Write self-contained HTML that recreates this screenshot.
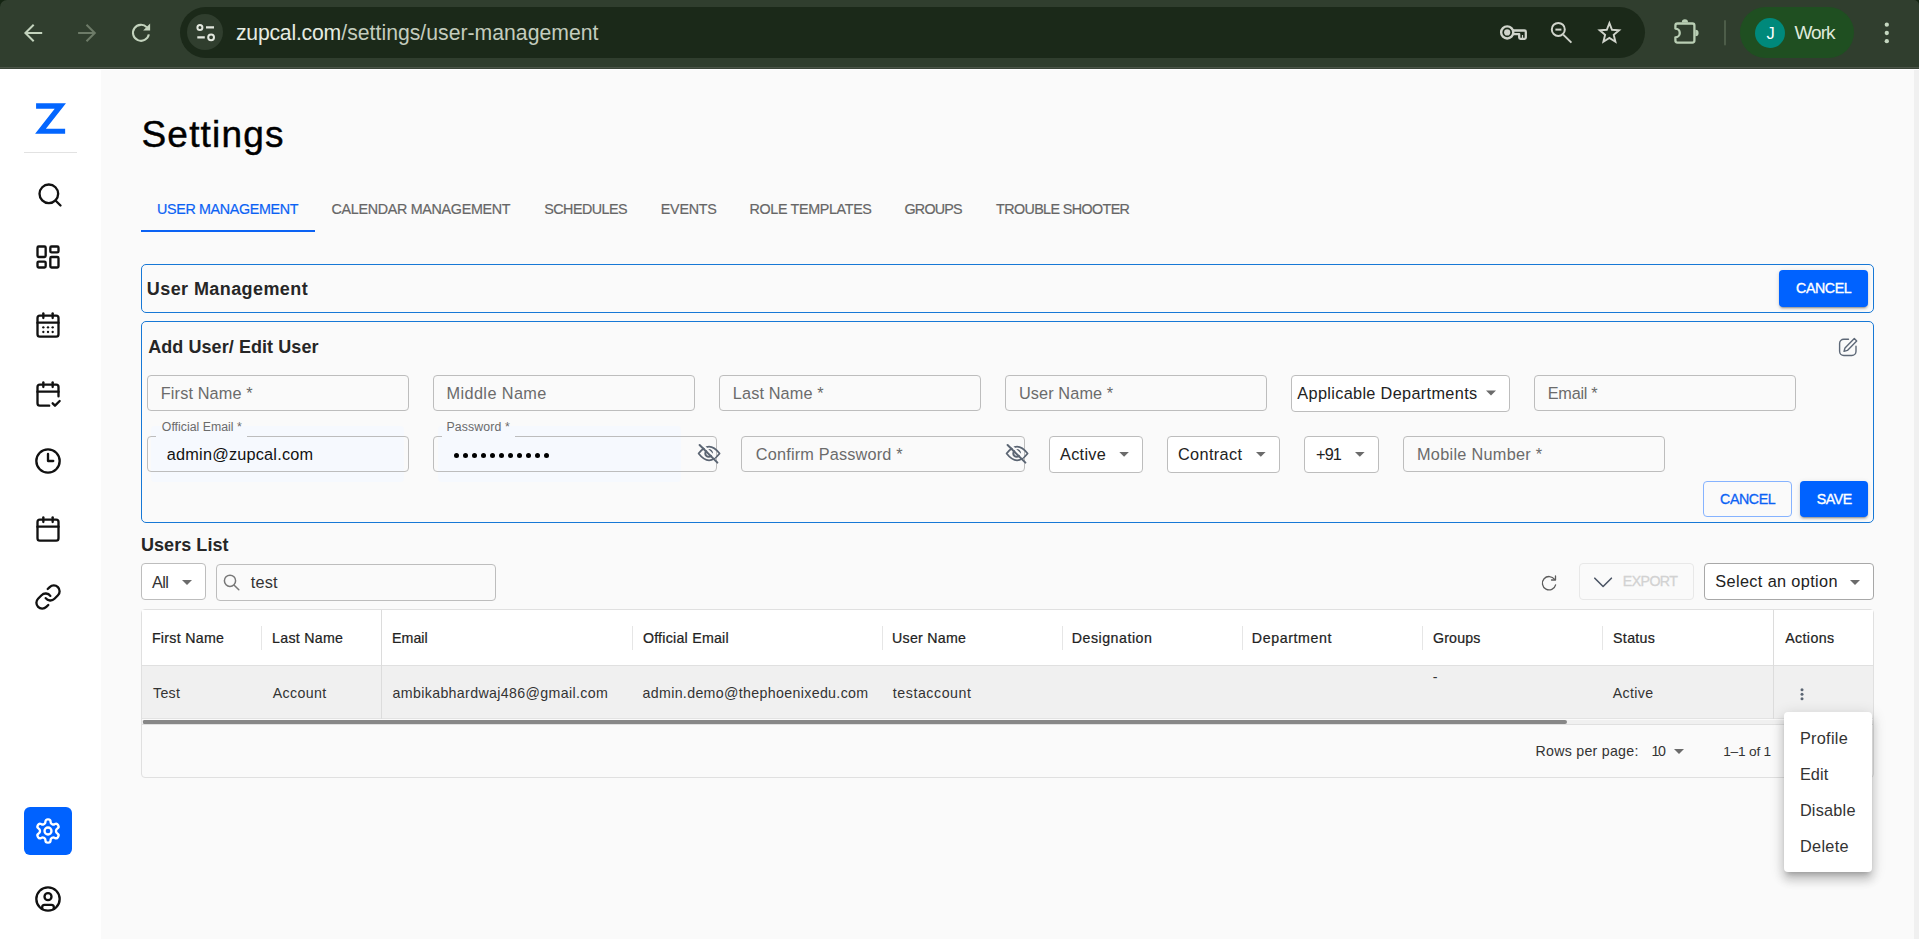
<!DOCTYPE html>
<html lang="en"><head><meta charset="utf-8"><title>Zupcal - Settings</title>
<style>
*{box-sizing:border-box;margin:0;padding:0}
html,body{width:1919px;height:939px;overflow:hidden;background:#fafafa;font-family:"Liberation Sans",sans-serif;}
.a{position:absolute}
.t{position:absolute;white-space:nowrap;line-height:1;font-family:"Liberation Sans",sans-serif;}
#chromebg{left:0;top:0;width:1919px;height:20px;background:#142412}
#chrome{left:0;top:0;width:1919px;height:69px;background:#303e2e;border-radius:7px 5px 0 0}
#chromeline{left:0;top:67px;width:1919px;height:1px;background:#4b5548}
#chromeline2{left:0;top:68px;width:1919px;height:1px;background:#3a4538}
#whiteline{left:0;top:69px;width:1919px;height:1px;background:#fff}
#omni{left:180px;top:7px;width:1465px;height:51px;border-radius:26px;background:#1b2919}
#site{left:187px;top:14px;width:36px;height:36px;border-radius:18px;background:#303e2e}
#prof{left:1740px;top:7px;width:114px;height:51px;border-radius:26px;background:#1f4f21}
#avatar{left:1755px;top:18px;width:30px;height:30px;border-radius:15px;background:#00897b}
#sidebar{left:0;top:70px;width:101px;height:869px;background:#fff}
#sdiv{left:24px;top:152px;width:53px;height:1px;background:#e2e2e2}
#setbtn{left:24px;top:807px;width:48px;height:48px;border-radius:6px;background:#0062ff}
#scrollstrip{left:1914px;top:70px;width:5px;height:869px;background:#f0f0f0}
#tabline{left:141px;top:230px;width:174px;height:2px;background:#0b62f4}
.card{border:1px solid #1778d6;border-radius:5px;background:#fafafa}
.inp{border:1px solid #bdbdbd;border-radius:4px;background:transparent}
.sel{border:1px solid #bdbdbd;border-radius:4px;background:#fff}
.btnp{background:#0062ff;border-radius:4px;box-shadow:0 3px 1px -2px rgba(0,0,0,.2),0 2px 2px 0 rgba(0,0,0,.14),0 1px 5px 0 rgba(0,0,0,.12)}
.btno{border:1px solid #86b3ff;border-radius:4px;background:transparent}
.notch{background:#f6f9fe;height:3px}
.af{background:#f6f9fe;border-radius:4px}
#table{left:141px;top:609px;width:1733px;height:169px;border:1px solid #e0e0e0;border-radius:4px;background:#fafafa;overflow:hidden}
#thead{left:142px;top:610px;width:1731px;height:55px;background:#fff}
#trow{left:142px;top:666px;width:1731px;height:52px;background:#f0f0f0}
.hl{height:1px;background:#e0e0e0}
.vl{width:1px;background:#e0e0e0}
.sep{width:1px;height:24px;top:626px;background:#e6e6e6}
#htrack{left:142px;top:720px;width:1731px;height:4px;background:#f0f0f0}
#hscroll{left:143px;top:720px;width:1424px;height:4px;border-radius:2px 3px 3px 2px;background:#878787}
#menu{left:1784px;top:712px;width:88px;height:160px;border-radius:4px;background:#fff;box-shadow:0 5px 5px -3px rgba(0,0,0,.2),0 8px 10px 1px rgba(0,0,0,.14),0 3px 14px 2px rgba(0,0,0,.12)}
svg{position:absolute;left:0;top:0;overflow:visible}
.dot{width:5px;height:5px;border-radius:50%;background:#000;top:452.5px}

</style></head>
<body>
<!-- ===== browser chrome ===== -->
<div class="a" id="chromebg"></div>
<div class="a" id="chrome"></div>
<div class="a" id="chromeline"></div>
<div class="a" id="chromeline2"></div>
<div class="a" id="whiteline"></div>
<div class="a" id="omni"></div>
<div class="a" id="site"></div>
<div class="a" id="prof"></div>
<div class="a" id="avatar"></div>
<svg width="1919" height="70" viewBox="0 0 1919 70" fill="none" stroke-linecap="round" stroke-linejoin="round">
  <!-- back -->
  <path d="M42.2 33H25.6M33.7 24.7l-8.3 8.3 8.3 8.3" stroke="#c3d3bd" stroke-width="2" stroke-linecap="butt" stroke-linejoin="miter"/>
  <!-- forward -->
  <path d="M78.1 33h16.4M86.5 24.7l8.3 8.3-8.3 8.3" stroke="#6d7b68" stroke-width="2" stroke-linecap="butt" stroke-linejoin="miter"/>
  <!-- reload -->
  <path d="M146.9 27.4A8 8 0 1 0 148.85 34.4" stroke="#c3d3bd" stroke-width="2.1" stroke-linecap="butt"/>
  <path d="M150.1 23.4v7h-7z" fill="#c3d3bd"/>
  <!-- site info (tune) -->
  <circle cx="199.9" cy="27.4" r="2.5" stroke="#e3e8df" stroke-width="2"/>
  <path d="M206 27.4h8M197.3 37.4h7.5" stroke="#e3e8df" stroke-width="2.1" stroke-linecap="butt"/>
  <circle cx="211.1" cy="37.3" r="2.9" stroke="#e3e8df" stroke-width="2"/>
  <!-- key -->
  <circle cx="1507.2" cy="32.4" r="6.05" stroke="#d0d4cb" stroke-width="2.4"/>
  <circle cx="1507.2" cy="32.4" r="3.1" fill="#d0d4cb"/>
  <path d="M1512.9 30.5H1524.5q1.3 0 1.3 1.3V37.6q0 1.3-1.3 1.3H1520.5q-1.3 0-1.3-1.3V34.2H1513.2" stroke="#d0d4cb" stroke-width="2.3" stroke-linecap="butt" stroke-linejoin="round"/>
  <path d="M1522.5 35V38" stroke="#d0d4cb" stroke-width="1.2" stroke-linecap="butt"/>
  <!-- zoom out -->
  <circle cx="1558.3" cy="29.4" r="6.5" stroke="#d0d4cb" stroke-width="2"/>
  <path d="M1555.4 29.6h6" stroke="#d0d4cb" stroke-width="2" stroke-linecap="butt"/>
  <path d="M1563.2 34.6l8.2 8" stroke="#d0d4cb" stroke-width="2" stroke-linecap="butt"/>
  <!-- star -->
  <path d="M1609.4 23.2 L1612.0 29.8 L1619.1 30.2 L1613.7 34.8 L1615.4 41.7 L1609.4 37.9 L1603.4 41.7 L1605.1 34.8 L1599.7 30.2 L1606.8 29.8Z" stroke="#d0d4cb" stroke-width="1.9" stroke-linejoin="miter"/>
  <!-- puzzle -->
  <path d="M1675.4 28.6V25.5a2 2 0 0 1 2-2H1692.4a2 2 0 0 1 2 2V40.6a2 2 0 0 1-2 2H1677.4a2 2 0 0 1-2-2V37.3a4.3 4.3 0 0 0 0-8.7z" stroke="#b9ceb4" stroke-width="2.3" stroke-linejoin="round"/>
  <path d="M1681.8 22.6a3.1 3.3 0 0 1 6.2 0z" fill="#b9ceb4"/>
  <path d="M1695.4 29.8a3.2 3.2 0 0 1 0 6.4z" fill="#b9ceb4"/>
  <!-- divider -->
  <path d="M1725 21v23.5" stroke="#4d5d49" stroke-width="2" stroke-linecap="round"/>
  <!-- menu dots -->
  <circle cx="1886.8" cy="24.7" r="2.15" fill="#c5d7c0"/><circle cx="1886.8" cy="33" r="2.15" fill="#c5d7c0"/><circle cx="1886.8" cy="41.2" r="2.15" fill="#c5d7c0"/>
</svg>

<!-- ===== app ===== -->
<div class="a" id="sidebar"></div>
<div class="a" id="scrollstrip"></div>
<div class="a" id="sdiv"></div>
<div class="a" id="setbtn"></div>
<svg width="101" height="939" viewBox="0 0 101 939" fill="none">
  <path d="M36.08 103.25H65.97L45.88 128.73H65.14V133.82H35.1L54.7 108.84H36.08Z" fill="#0366ff"/>
</svg>
<!-- sidebar icons (28px, lucide-like) -->
<svg class="ic" style="left:35.9px;top:180.9px" width="28" height="28" viewBox="0 0 24 24" fill="none" stroke="#111" stroke-width="2" stroke-linecap="round" stroke-linejoin="round"><circle cx="11" cy="11" r="8"/><path d="m21 21-4.3-4.3"/></svg>
<svg class="ic" style="left:34.4px;top:242.7px" width="28" height="28" viewBox="0 0 24 24" fill="none" stroke="#111" stroke-width="2" stroke-linecap="round" stroke-linejoin="round"><rect width="7" height="9" x="3" y="3" rx="1"/><rect width="7" height="5" x="14" y="3" rx="1"/><rect width="7" height="9" x="14" y="12" rx="1"/><rect width="7" height="5" x="3" y="16" rx="1"/></svg>
<svg class="ic" style="left:34.3px;top:310.9px" width="28" height="28" viewBox="0 0 24 24" fill="none" stroke="#111" stroke-width="2" stroke-linecap="round" stroke-linejoin="round"><path d="M8 2v4"/><path d="M16 2v4"/><rect width="18" height="18" x="3" y="4" rx="2"/><path d="M3 10h18"/><path d="M8 14h.01"/><path d="M12 14h.01"/><path d="M16 14h.01"/><path d="M8 18h.01"/><path d="M12 18h.01"/><path d="M16 18h.01"/></svg>
<svg class="ic" style="left:34.3px;top:379.8px" width="28" height="28" viewBox="0 0 24 24" fill="none" stroke="#111" stroke-width="2" stroke-linecap="round" stroke-linejoin="round"><path d="M8 2v4"/><path d="M16 2v4"/><path d="M21 14V6a2 2 0 0 0-2-2H5a2 2 0 0 0-2 2v14a2 2 0 0 0 2 2h8"/><path d="M3 10h18"/><path d="m16 20 2 2 4-4"/></svg>
<svg class="ic" style="left:34.2px;top:447.4px" width="28" height="28" viewBox="0 0 24 24" fill="none" stroke="#111" stroke-width="2" stroke-linecap="round" stroke-linejoin="round"><circle cx="12" cy="12" r="10"/><polyline points="12 6 12 12 16.5 12"/></svg>
<svg class="ic" style="left:34.3px;top:515px" width="28" height="28" viewBox="0 0 24 24" fill="none" stroke="#111" stroke-width="2" stroke-linecap="round" stroke-linejoin="round"><path d="M8 2v4"/><path d="M16 2v4"/><rect width="18" height="18" x="3" y="4" rx="2"/><path d="M3 10h18"/></svg>
<svg class="ic" style="left:34.3px;top:582.7px" width="28" height="28" viewBox="0 0 24 24" fill="none" stroke="#111" stroke-width="2" stroke-linecap="round" stroke-linejoin="round"><path d="M10 13a5 5 0 0 0 7.54.54l3-3a5 5 0 0 0-7.07-7.07l-1.72 1.71"/><path d="M14 11a5 5 0 0 0-7.54-.54l-3 3a5 5 0 0 0 7.07 7.07l1.71-1.71"/></svg>
<svg class="ic" style="left:34px;top:817.1px" width="28" height="28" viewBox="0 0 24 24" fill="none" stroke="#fff" stroke-width="2" stroke-linecap="round" stroke-linejoin="round"><path d="M12.22 2h-.44a2 2 0 0 0-2 2v.18a2 2 0 0 1-1 1.73l-.43.25a2 2 0 0 1-2 0l-.15-.08a2 2 0 0 0-2.73.73l-.22.38a2 2 0 0 0 .73 2.73l.15.1a2 2 0 0 1 1 1.72v.51a2 2 0 0 1-1 1.74l-.15.09a2 2 0 0 0-.73 2.73l.22.38a2 2 0 0 0 2.73.73l.15-.08a2 2 0 0 1 2 0l.43.25a2 2 0 0 1 1 1.73V20a2 2 0 0 0 2 2h.44a2 2 0 0 0 2-2v-.18a2 2 0 0 1 1-1.73l.43-.25a2 2 0 0 1 2 0l.15.08a2 2 0 0 0 2.73-.73l.22-.39a2 2 0 0 0-.73-2.73l-.15-.08a2 2 0 0 1-1-1.74v-.5a2 2 0 0 1 1-1.74l.15-.09a2 2 0 0 0 .73-2.73l-.22-.38a2 2 0 0 0-2.73-.73l-.15.08a2 2 0 0 1-2 0l-.43-.25a2 2 0 0 1-1-1.73V4a2 2 0 0 0-2-2z"/><circle cx="12" cy="12" r="3"/></svg>
<svg class="ic" style="left:34.1px;top:885px" width="28" height="28" viewBox="0 0 24 24" fill="none" stroke="#111" stroke-width="2" stroke-linecap="round" stroke-linejoin="round"><circle cx="12" cy="12" r="10"/><circle cx="12" cy="10" r="3"/><path d="M7 20.662V19a2 2 0 0 1 2-2h6a2 2 0 0 1 2 2v1.662"/></svg>

<div class="a" id="tabline"></div>

<!-- cards -->
<div class="a card" style="left:141px;top:264px;width:1733px;height:49px"></div>
<div class="a card" style="left:141px;top:321px;width:1733px;height:202px"></div>
<div class="a btnp" style="left:1779px;top:270px;width:89px;height:37px"></div>

<!-- autofill tint -->
<div class="a af" style="left:151px;top:426px;width:253px;height:56px"></div>
<div class="a af" style="left:438px;top:426px;width:243px;height:56px"></div>

<!-- row 1 inputs -->
<div class="a inp" style="left:147px;top:375px;width:262px;height:36px"></div>
<div class="a inp" style="left:433px;top:375px;width:262px;height:36px"></div>
<div class="a inp" style="left:719px;top:375px;width:262px;height:36px"></div>
<div class="a inp" style="left:1005px;top:375px;width:262px;height:36px"></div>
<div class="a sel" style="left:1291px;top:375px;width:219px;height:37px"></div>
<div class="a inp" style="left:1534px;top:375px;width:262px;height:36px"></div>
<!-- row 2 inputs -->
<div class="a inp" style="left:147px;top:436px;width:262px;height:36px"></div>
<div class="a notch" style="left:155.5px;top:435px;width:91.5px"></div>
<div class="a inp" style="left:433px;top:436px;width:284px;height:36px"></div>
<div class="a notch" style="left:441.5px;top:435px;width:73.5px"></div>
<div class="a inp" style="left:741px;top:436px;width:284px;height:36px"></div>
<div class="a sel" style="left:1049px;top:436px;width:94px;height:37px"></div>
<div class="a sel" style="left:1167px;top:436px;width:113px;height:37px"></div>
<div class="a sel" style="left:1304px;top:436px;width:75px;height:37px"></div>
<div class="a inp" style="left:1403px;top:436px;width:262px;height:36px"></div>
<!-- buttons -->
<div class="a btno" style="left:1703px;top:481px;width:89px;height:36px"></div>
<div class="a btnp" style="left:1800px;top:481px;width:68px;height:36px"></div>

<!-- list toolbar -->
<div class="a sel" style="left:141px;top:563px;width:65px;height:37px"></div>
<div class="a inp" style="left:216px;top:564px;width:280px;height:37px"></div>
<div class="a" style="left:1579px;top:563px;width:115px;height:37px;border:1px solid #e8e8e8;border-radius:4px"></div>
<div class="a sel" style="left:1704px;top:563px;width:170px;height:37px;background:#fff;border-color:#a8a8a8"></div>

<!-- table -->
<div class="a" id="table"></div>
<div class="a" id="thead"></div>
<div class="a" id="trow"></div>
<div class="a hl" style="left:142px;top:665px;width:1731px"></div>
<div class="a hl" style="left:142px;top:718px;width:1731px;background:#e3e3e3"></div>
<div class="a hl" style="left:142px;top:724px;width:1731px"></div>
<div class="a vl" style="left:381px;top:610px;height:109px;background:#dcdcdc"></div>
<div class="a vl" style="left:1773px;top:610px;height:109px;background:#dcdcdc"></div>
<div class="a sep" style="left:261px"></div>
<div class="a sep" style="left:632px"></div>
<div class="a sep" style="left:882px"></div>
<div class="a sep" style="left:1062px"></div>
<div class="a sep" style="left:1242px"></div>
<div class="a sep" style="left:1422px"></div>
<div class="a sep" style="left:1602px"></div>
<div class="a" id="htrack"></div>
<div class="a" id="hscroll"></div>

<!-- password dots -->
<div id="dots">
<i class="a dot" style="left:453.8px"></i><i class="a dot" style="left:462.85px"></i><i class="a dot" style="left:471.9px"></i><i class="a dot" style="left:480.95px"></i><i class="a dot" style="left:490px"></i><i class="a dot" style="left:499.05px"></i><i class="a dot" style="left:508.1px"></i><i class="a dot" style="left:517.15px"></i><i class="a dot" style="left:526.2px"></i><i class="a dot" style="left:535.25px"></i><i class="a dot" style="left:544.3px"></i>
</div>

<!-- main-area icons -->
<svg width="1919" height="939" viewBox="0 0 1919 939" fill="none" stroke-linecap="round" stroke-linejoin="round">
  <!-- edit icon -->
  <path d="M1848.5 339.3h-4.7a4.2 4.2 0 0 0-4.2 4.2v7.8a4.2 4.2 0 0 0 4.2 4.2h8a4.2 4.2 0 0 0 4.2-4.2v-5" stroke="#5d6877" stroke-width="1.4"/>
  <path d="M1854.3 338.6l2.4 2.4-9.3 9.4-3.4 1 1-3.4z" stroke="#5d6877" stroke-width="1.4"/>
  <!-- eye-off 1 -->
  <g id="eye1" stroke="#5b6573" stroke-width="1.75">
    <path d="M698.6 453.5Q709 439.6 719.6 453.5Q709 467 698.6 453.5Z"/>
    <circle cx="708.7" cy="453.4" r="3.4" stroke-width="2"/>
    <path d="M701.7 443.9l13.4 13.4" stroke="#fafafa" stroke-width="2.1" stroke-linecap="butt"/>
    <path d="M699.6 445l17.8 17.6" stroke-width="2"/>
  </g>
  <g id="eye2" stroke="#5b6573" stroke-width="1.75" transform="translate(308 0)">
    <path d="M698.6 453.5Q709 439.6 719.6 453.5Q709 467 698.6 453.5Z"/>
    <circle cx="708.7" cy="453.4" r="3.4" stroke-width="2"/>
    <path d="M701.7 443.9l13.4 13.4" stroke="#fafafa" stroke-width="2.1" stroke-linecap="butt"/>
    <path d="M699.6 445l17.8 17.6" stroke-width="2"/>
  </g>
  <!-- select arrows -->
  <g fill="#6b6b6b" stroke="none">
    <path d="M1486 390.6l5 5 5-5z"/>
    <path d="M1119.3 452l4.8 4.8 4.8-4.8z"/>
    <path d="M1256 452l4.8 4.8 4.8-4.8z"/>
    <path d="M1355 452l4.8 4.8 4.8-4.8z"/>
    <path d="M182 580l5 5 5-5z"/>
    <path d="M1850 580l5 5 5-5z"/>
    <path d="M1674 749l5 5 5-5z"/>
  </g>
  <!-- search icon -->
  <circle cx="230" cy="580.8" r="5.6" stroke="#777" stroke-width="1.5"/>
  <path d="M234.2 585.2l4.6 4.6" stroke="#777" stroke-width="1.5"/>
  <!-- refresh -->
  <path d="M1554.6 579.4a6.7 6.7 0 1 0 1 5.4" stroke="#5c5c5c" stroke-width="1.3"/>
  <path d="M1555.5 576v4h-4" stroke="#5c5c5c" stroke-width="1.3"/>
  <!-- export chevron -->
  <path d="M1594.8 578.2l8.3 8.3 8.3-8.3" stroke="#4b5565" stroke-width="1.6"/>
  <!-- row kebab -->
  <circle cx="1802" cy="689.8" r="1.5" fill="#5b6573"/><circle cx="1802" cy="694.3" r="1.5" fill="#5b6573"/><circle cx="1802" cy="698.8" r="1.5" fill="#5b6573"/>
</svg>

<div class="a" id="menu"></div>

<div id="texts">
<span class="t" style="left:236.0px;top:21.65px;font-size:21.2px;color:#e6ece2;letter-spacing:-0.223px;">zupcal.com</span>
<span class="t" style="left:341.3px;top:21.65px;font-size:21.2px;color:#c3ccbe;letter-spacing:0.015px;">/settings/user-management</span>
<span class="t" style="left:1766.5px;top:24.83px;font-size:16.5px;color:#ffffff;letter-spacing:0.000px;">J</span>
<span class="t" style="left:1794.5px;top:23.42px;font-size:19px;color:#dfe9da;letter-spacing:-0.995px;">Work</span>
<span class="t" style="left:141.5px;top:115.68px;font-size:37px;color:#000;letter-spacing:1.187px;-webkit-text-stroke:0.45px #000;">Settings</span>
<span class="t" style="left:157.0px;top:202.10px;font-size:14.3px;color:#0b62f4;letter-spacing:-0.330px;-webkit-text-stroke:0.2px #0b62f4;">USER MANAGEMENT</span>
<span class="t" style="left:331.5px;top:202.10px;font-size:14.3px;color:#666;letter-spacing:-0.292px;-webkit-text-stroke:0.2px #666;">CALENDAR MANAGEMENT</span>
<span class="t" style="left:544.3px;top:202.10px;font-size:14.3px;color:#666;letter-spacing:-0.520px;-webkit-text-stroke:0.2px #666;">SCHEDULES</span>
<span class="t" style="left:660.8px;top:202.10px;font-size:14.3px;color:#666;letter-spacing:-0.233px;-webkit-text-stroke:0.2px #666;">EVENTS</span>
<span class="t" style="left:749.5px;top:202.10px;font-size:14.3px;color:#666;letter-spacing:-0.324px;-webkit-text-stroke:0.2px #666;">ROLE TEMPLATES</span>
<span class="t" style="left:904.5px;top:202.10px;font-size:14.3px;color:#666;letter-spacing:-0.785px;-webkit-text-stroke:0.2px #666;">GROUPS</span>
<span class="t" style="left:996.0px;top:202.10px;font-size:14.3px;color:#666;letter-spacing:-0.591px;-webkit-text-stroke:0.2px #666;">TROUBLE SHOOTER</span>
<span class="t" style="left:146.8px;top:280.36px;font-size:18px;color:#262626;font-weight:700;letter-spacing:0.418px;">User Management</span>
<span class="t" style="left:1796.1px;top:280.98px;font-size:14.2px;color:#fff;letter-spacing:-0.393px;-webkit-text-stroke:0.35px #fff;">CANCEL</span>
<span class="t" style="left:148.2px;top:338.26px;font-size:18px;color:#262626;font-weight:700;letter-spacing:0.070px;">Add User/ Edit User</span>
<span class="t" style="left:160.8px;top:385.00px;font-size:16.3px;color:#6b6b6b;letter-spacing:0.125px;">First Name *</span>
<span class="t" style="left:446.5px;top:385.00px;font-size:16.3px;color:#6b6b6b;letter-spacing:0.394px;">Middle Name</span>
<span class="t" style="left:732.8px;top:385.00px;font-size:16.3px;color:#6b6b6b;letter-spacing:0.125px;">Last Name *</span>
<span class="t" style="left:1019.0px;top:385.00px;font-size:16.3px;color:#6b6b6b;letter-spacing:0.095px;">User Name *</span>
<span class="t" style="left:1297.3px;top:385.00px;font-size:16.3px;color:#222;letter-spacing:0.333px;">Applicable Departments</span>
<span class="t" style="left:1547.8px;top:385.00px;font-size:16.3px;color:#6b6b6b;letter-spacing:-0.289px;">Email *</span>
<span class="t" style="left:161.8px;top:420.89px;font-size:12.3px;color:#6b6b6b;letter-spacing:0.017px;">Official Email *</span>
<span class="t" style="left:446.5px;top:420.89px;font-size:12.3px;color:#6b6b6b;letter-spacing:0.121px;">Password *</span>
<span class="t" style="left:166.8px;top:446.20px;font-size:16.3px;color:#111;letter-spacing:0.203px;">admin@zupcal.com</span>
<span class="t" style="left:755.8px;top:446.20px;font-size:16.3px;color:#6b6b6b;letter-spacing:0.175px;">Confirm Password *</span>
<span class="t" style="left:1060.0px;top:446.20px;font-size:16.3px;color:#222;letter-spacing:0.304px;">Active</span>
<span class="t" style="left:1178.0px;top:446.20px;font-size:16.3px;color:#222;letter-spacing:0.356px;">Contract</span>
<span class="t" style="left:1316.0px;top:446.20px;font-size:16.3px;color:#222;letter-spacing:-0.881px;">+91</span>
<span class="t" style="left:1417.0px;top:446.20px;font-size:16.3px;color:#6b6b6b;letter-spacing:0.278px;">Mobile Number *</span>
<span class="t" style="left:1720.1px;top:491.98px;font-size:14.2px;color:#0b62f4;letter-spacing:-0.393px;-webkit-text-stroke:0.3px #0b62f4;">CANCEL</span>
<span class="t" style="left:1816.8px;top:491.98px;font-size:14.2px;color:#fff;letter-spacing:-0.478px;-webkit-text-stroke:0.35px #fff;">SAVE</span>
<span class="t" style="left:141.0px;top:535.96px;font-size:18px;color:#262626;font-weight:700;letter-spacing:0.051px;">Users List</span>
<span class="t" style="left:151.9px;top:573.80px;font-size:16.3px;color:#333;letter-spacing:-0.538px;">All</span>
<span class="t" style="left:250.8px;top:573.80px;font-size:16.3px;color:#333;letter-spacing:0.160px;">test</span>
<span class="t" style="left:1622.8px;top:574.48px;font-size:14.2px;color:#d2d2d2;letter-spacing:-0.603px;-webkit-text-stroke:0.3px #d2d2d2;">EXPORT</span>
<span class="t" style="left:1715.3px;top:573.10px;font-size:16.3px;color:#222;letter-spacing:0.366px;">Select an option</span>
<span class="t" style="left:151.9px;top:630.98px;font-size:14.2px;color:#222;letter-spacing:0.303px;-webkit-text-stroke:0.22px #222;">First Name</span>
<span class="t" style="left:272.1px;top:630.98px;font-size:14.2px;color:#222;letter-spacing:0.273px;-webkit-text-stroke:0.22px #222;">Last Name</span>
<span class="t" style="left:392.1px;top:630.98px;font-size:14.2px;color:#222;letter-spacing:0.019px;-webkit-text-stroke:0.22px #222;">Email</span>
<span class="t" style="left:642.9px;top:630.98px;font-size:14.2px;color:#222;letter-spacing:0.249px;-webkit-text-stroke:0.22px #222;">Official Email</span>
<span class="t" style="left:892.0px;top:630.98px;font-size:14.2px;color:#222;letter-spacing:0.269px;-webkit-text-stroke:0.22px #222;">User Name</span>
<span class="t" style="left:1071.7px;top:630.98px;font-size:14.2px;color:#222;letter-spacing:0.526px;-webkit-text-stroke:0.22px #222;">Designation</span>
<span class="t" style="left:1251.8px;top:630.98px;font-size:14.2px;color:#222;letter-spacing:0.624px;-webkit-text-stroke:0.22px #222;">Department</span>
<span class="t" style="left:1433.0px;top:630.98px;font-size:14.2px;color:#222;letter-spacing:0.174px;-webkit-text-stroke:0.22px #222;">Groups</span>
<span class="t" style="left:1613.1px;top:630.98px;font-size:14.2px;color:#222;letter-spacing:0.315px;-webkit-text-stroke:0.22px #222;">Status</span>
<span class="t" style="left:1785.2px;top:630.98px;font-size:14.2px;color:#222;letter-spacing:0.395px;-webkit-text-stroke:0.22px #222;">Actions</span>
<span class="t" style="left:153.0px;top:686.18px;font-size:14.2px;color:#333;letter-spacing:0.308px;">Test</span>
<span class="t" style="left:272.8px;top:686.18px;font-size:14.2px;color:#333;letter-spacing:0.363px;">Account</span>
<span class="t" style="left:392.5px;top:686.18px;font-size:14.2px;color:#333;letter-spacing:0.357px;">ambikabhardwaj486@gmail.com</span>
<span class="t" style="left:642.5px;top:686.18px;font-size:14.2px;color:#333;letter-spacing:0.345px;">admin.demo@thephoenixedu.com</span>
<span class="t" style="left:892.8px;top:686.18px;font-size:14.2px;color:#333;letter-spacing:0.558px;">testaccount</span>
<span class="t" style="left:1612.8px;top:686.18px;font-size:14.2px;color:#333;letter-spacing:0.351px;">Active</span>
<span class="t" style="left:1432.8px;top:669.98px;font-size:14.2px;color:#333;letter-spacing:0.000px;">-</span>
<span class="t" style="left:1535.5px;top:744.18px;font-size:14.2px;color:#333;letter-spacing:0.267px;">Rows per page:</span>
<span class="t" style="left:1651.5px;top:744.18px;font-size:14.2px;color:#333;letter-spacing:-1.390px;">10</span>
<span class="t" style="left:1723.2px;top:744.60px;font-size:13.7px;color:#333;letter-spacing:-0.208px;">1–1 of 1</span>
<span class="t" style="left:1799.9px;top:730.00px;font-size:16.3px;color:#333;letter-spacing:0.284px;">Profile</span>
<span class="t" style="left:1799.9px;top:766.00px;font-size:16.3px;color:#333;letter-spacing:0.090px;">Edit</span>
<span class="t" style="left:1799.9px;top:802.00px;font-size:16.3px;color:#333;letter-spacing:0.210px;">Disable</span>
<span class="t" style="left:1799.9px;top:838.00px;font-size:16.3px;color:#333;letter-spacing:0.338px;">Delete</span>
</div>
</body></html>
